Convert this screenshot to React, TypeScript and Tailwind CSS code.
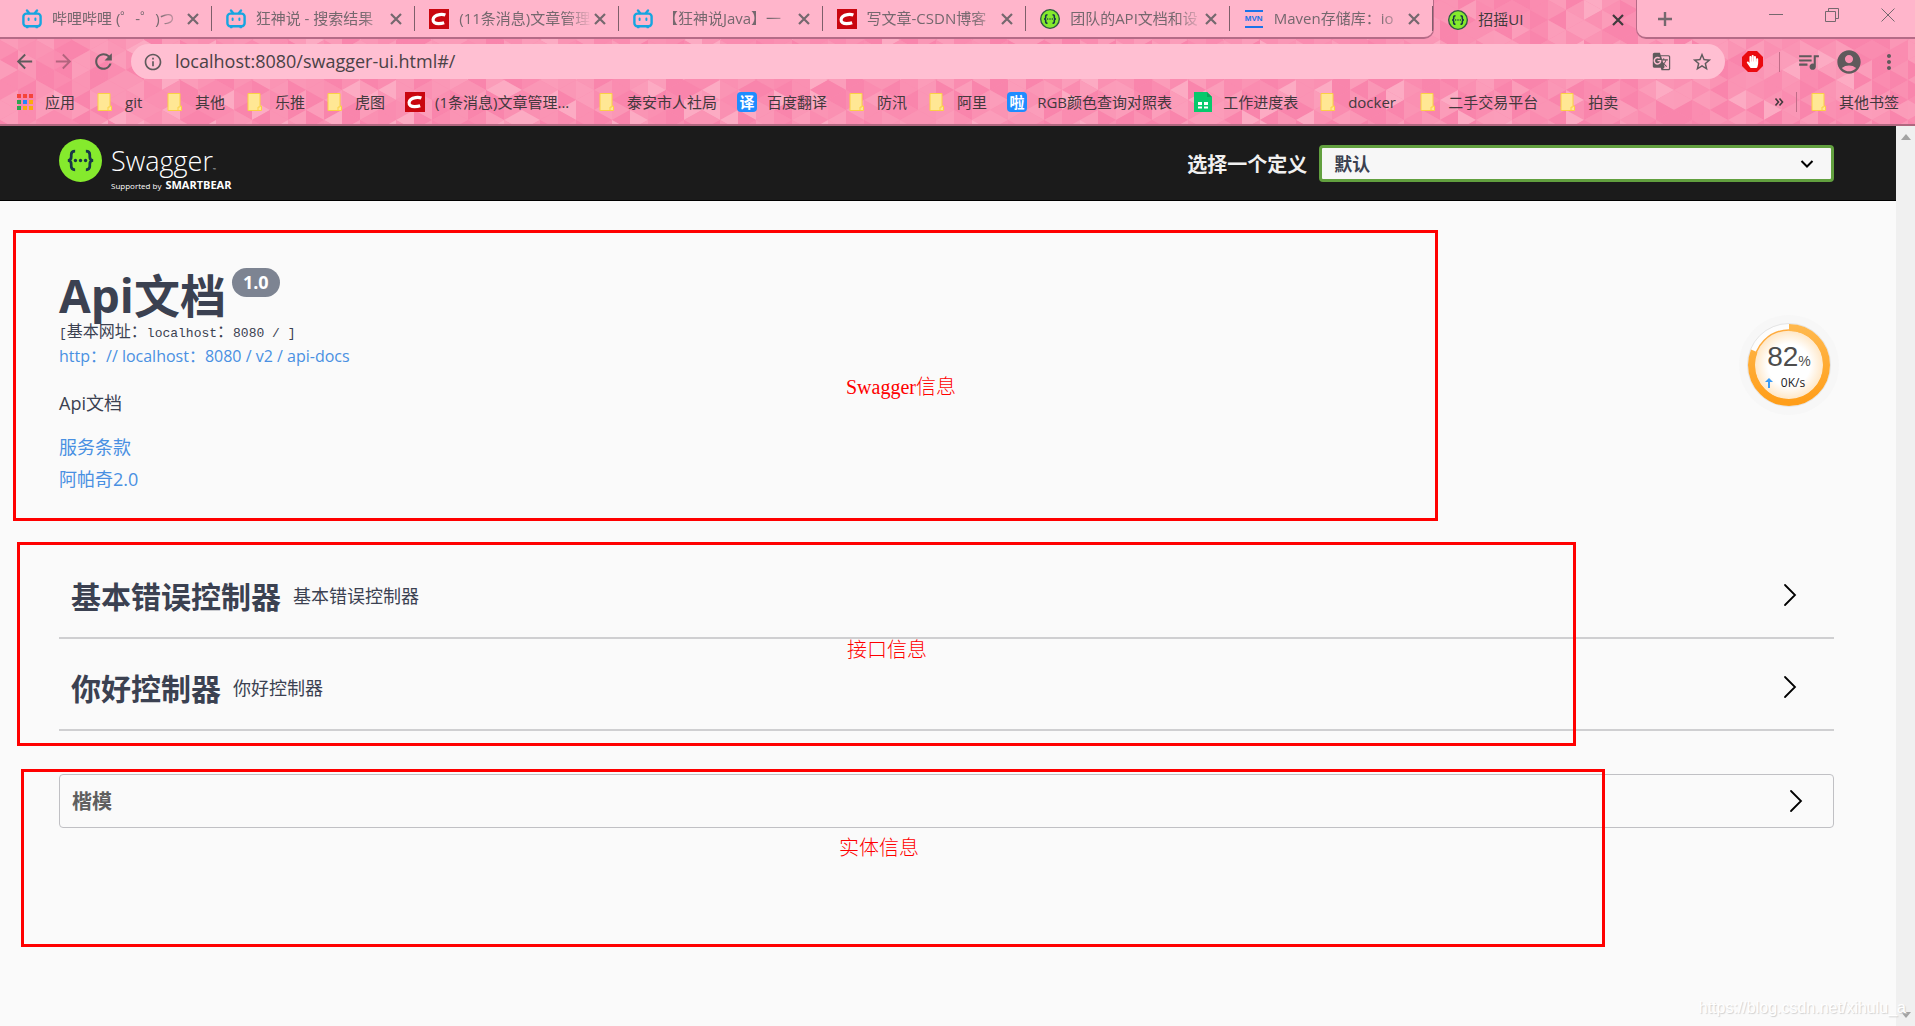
import type { ReactNode } from "react";
import {
  MdAccountCircle,
  MdArrowBack,
  MdArrowForward,
  MdGTranslate,
  MdMoreVert,
  MdOutlineInfo,
  MdQueueMusic,
  MdRefresh,
  MdStarBorder,
} from "react-icons/md";
import { FaHandPaper } from "react-icons/fa";

/* ---------- theme artwork ---------- */

const COL = 18;
const TRI = 20;
const SHADES = ["#f985ac", "#fa8cb0", "#fa94b4", "#fa97b6", "#fb9dba", "#fb9cb9", "#fa90b2", "#fcabc3"];

function shade(a: number, b: number, c: number) {
  const n = Math.sin(a * 127.1 + b * 311.7 + c * 74.7) * 43758.5453;
  const f = n - Math.floor(n);
  return SHADES[Math.floor(Math.pow(f, 1.4) * SHADES.length) % SHADES.length];
}

function ThemeTriangles() {
  const shapes: ReactNode[] = [];
  for (let i = 0; i < 150; i++) {
    const x = i * COL;
    const off = i % 2 ? -TRI / 2 : 0;
    for (let j = -1; j < 8; j++) {
      const y = j * TRI + off;
      shapes.push(
        <polygon
          key={`r${i}-${j}`}
          points={`${x},${y} ${x + COL},${y + TRI / 2} ${x},${y + TRI}`}
          fill={shade(i, j, 1)}
        />,
        <polygon
          key={`l${i}-${j}`}
          points={`${x + COL},${y + TRI / 2} ${x + COL},${y + TRI + TRI / 2} ${x},${y + TRI}`}
          fill={shade(i, j, 2)}
        />,
      );
    }
  }
  return (
    <svg className="absolute inset-0 h-full w-full" aria-hidden="true">
      <rect width="100%" height="100%" fill="#fa8fb1" />
      {shapes}
    </svg>
  );
}

/* ---------- icons ---------- */

function BiliIcon() {
  return (
    <svg viewBox="0 0 20 20" className="size-5 shrink-0" fill="none" stroke="#16a5e0" strokeWidth="2.4" strokeLinecap="round">
      <rect x="1.4" y="4.6" width="17.2" height="12.6" rx="3" />
      <path d="M5 1.4 7 4M15 1.4 13 4" />
      <path d="M6.6 9.4v1.6M13.4 9.4v1.6" strokeWidth="2" />
      <path d="M4.5 18.6h1.5M14 18.6h1.5" strokeWidth="1.4" />
    </svg>
  );
}

function CsdnIcon() {
  return (
    <svg viewBox="0 0 20 20" className="size-5 shrink-0">
      <rect width="20" height="20" fill="#c9060f" />
      <path
        d="M16.4 6.1C14.600 5.400 12.500 5.300 10.600 5.600 7.300 6.100 4.400 7.700 4.100 10.500 3.800 13.400 6.300 14.600 9.500 14.600 11.400 14.600 13.400 14.400 15.200 13.800"
        fill="none"
        stroke="#fff"
        strokeWidth="3.200"
      />
    </svg>
  );
}

function SwaggerMark({ className, ring }: { className: string; ring?: boolean }) {
  return (
    <svg viewBox="0 0 44 44" className={className}>
      <circle cx="22" cy="22" r={ring ? 20.5 : 22} fill="#85ea2d" stroke={ring ? "#2f5a42" : "none"} strokeWidth="3" />
      <g fill="none" stroke="#173647" strokeWidth={ring ? 3.4 : 2.8}>
        <path d="M16.500 12.500c-3 0-4 1-4 3.500v2.500c0 2-1 3.500-3.500 3.500 2.500 0 3.500 1.500 3.500 3.500V28c0 2.500 1 3.500 4 3.500" />
        <path d="M27.500 12.500c3 0 4 1 4 3.500v2.500c0 2 1 3.500 3.500 3.500-2.500 0-3.500 1.500-3.500 3.500V28c0 2.500-1 3.500-4 3.500" />
      </g>
      <g fill="#173647">
        <circle cx="16.800" cy="22" r="1.700" />
        <circle cx="22" cy="22" r="1.700" />
        <circle cx="27.200" cy="22" r="1.700" />
      </g>
    </svg>
  );
}

function MvnIcon() {
  return (
    <span className="flex size-5 shrink-0 items-center justify-center">
      <span className="flex h-[18px] w-[18px] items-center justify-center border-y-2 border-[#1a73e8] font-['Liberation_Sans'] text-[8px] font-bold leading-none text-[#1a73e8]">
        MVN
      </span>
    </span>
  );
}

function FolderIcon() {
  return (
    <svg viewBox="0 0 20 20" className="size-5 shrink-0">
      <path d="M3 1.500h12v12.500h1.500v4.500H3z" fill="#ffe794" stroke="#fbd044" />
      <path d="M13 18.500v-3.500h2v-1" fill="none" stroke="#fbd044" />
    </svg>
  );
}

function AppsIcon() {
  const colors = ["#f5443a", "#f5443a", "#f5443a", "#2ea44f", "#2386fa", "#fbab0c", "#2ea44f", "#fbab0c", "#fbab0c"];
  return (
    <svg viewBox="0 0 20 20" className="size-5 shrink-0">
      {colors.map((c, i) => (
        <rect key={i} x={2 + (i % 3) * 6} y={2 + Math.floor(i / 3) * 6} width="4" height="4" fill={c} />
      ))}
    </svg>
  );
}

function SheetIcon() {
  return (
    <svg viewBox="0 0 20 20" className="size-5 shrink-0">
      <path d="M1 0h13l5 5v15H1z" fill="#07c96c" />
      <path d="M14 0l5 5h-5z" fill="#0aa85b" />
      <path d="M5 10h4v3H5zM11 10h4v3h-4zM5 14.500h4v2H5zM11 14.500h4v2h-4z" fill="#fff" />
    </svg>
  );
}

function GlyphIcon({ children }: { children: string }) {
  return (
    <span className="flex size-5 shrink-0 items-center justify-center rounded bg-[#1f8cff] text-[15px] font-bold leading-5 text-white">
      {children}
    </span>
  );
}

function CloseIcon({ className }: { className: string }) {
  return (
    <svg viewBox="0 0 16 16" className={className} stroke="currentColor" strokeWidth="2.200" fill="none">
      <path d="M3 3l10 10M13 3 3 13" />
    </svg>
  );
}

function Chevron() {
  return (
    <svg viewBox="0 0 24 24" className="size-6" fill="none" stroke="#000" strokeWidth="1.800" strokeLinecap="round">
      <path d="M7 2l10 10L7 22" />
    </svg>
  );
}

/* ---------- browser chrome ---------- */

const TABS: { icon: ReactNode; title: string }[] = [
  { icon: <BiliIcon />, title: "哔哩哔哩 (゜-゜)つ" },
  { icon: <BiliIcon />, title: "狂神说 - 搜索结果" },
  { icon: <CsdnIcon />, title: "(11条消息)文章管理" },
  { icon: <BiliIcon />, title: "【狂神说Java】一" },
  { icon: <CsdnIcon />, title: "写文章-CSDN博客" },
  { icon: <SwaggerMark ring className="size-5 shrink-0" />, title: "团队的API文档和设" },
  { icon: <MvnIcon />, title: "Maven存储库：io" },
];

const BOOKMARKS: { icon: ReactNode; label: string; width?: string }[] = [
  { icon: <AppsIcon />, label: "应用" },
  { icon: <FolderIcon />, label: "git", width: "w-5" },
  { icon: <FolderIcon />, label: "其他" },
  { icon: <FolderIcon />, label: "乐推" },
  { icon: <FolderIcon />, label: "虎图" },
  { icon: <CsdnIcon />, label: "(1条消息)文章管理...", width: "w-[142px]" },
  { icon: <FolderIcon />, label: "泰安市人社局" },
  { icon: <GlyphIcon>译</GlyphIcon>, label: "百度翻译" },
  { icon: <FolderIcon />, label: "防汛" },
  { icon: <FolderIcon />, label: "阿里" },
  { icon: <GlyphIcon>啦</GlyphIcon>, label: "RGB颜色查询对照表", width: "w-[136px]" },
  { icon: <SheetIcon />, label: "工作进度表" },
  { icon: <FolderIcon />, label: "docker", width: "w-[50px]" },
  { icon: <FolderIcon />, label: "二手交易平台" },
  { icon: <FolderIcon />, label: "拍卖" },
];

function TabStrip() {
  return (
    <div className="relative flex h-[39px]">
      <div className="flex w-[74.9%] min-w-0 rounded-br-[10px] border-b-2 border-r border-[#b56b87] bg-[#ffb5cb] pl-2">
        {TABS.map((tab) => (
          <div key={tab.title} className="flex min-w-0 flex-1 items-center pl-[14px] text-[#75686e]">
            {tab.icon}
            <span className="ml-[10px] min-w-0 flex-1 overflow-hidden whitespace-nowrap text-[15px] [mask-image:linear-gradient(to_right,black_80%,transparent)]">
              {tab.title}
            </span>
            <button aria-label="关闭标签页" className="mr-[10px] shrink-0">
              <CloseIcon className="size-4" />
            </button>
            <span className="h-[25px] w-px shrink-0 bg-[#7d5f6a]" />
          </div>
        ))}
      </div>
      <div className="flex w-[202px] shrink-0 items-center pl-[14px] text-[#3f3a3c]">
        <SwaggerMark ring className="size-5 shrink-0" />
        <span className="ml-[10px] flex-1 text-[15px]">招摇UI</span>
        <button aria-label="关闭标签页" className="mr-[10px] shrink-0">
          <CloseIcon className="size-4" />
        </button>
      </div>
      <div className="flex min-w-0 flex-1 items-center rounded-bl-[10px] border-b-2 border-l border-[#b56b87] bg-[#ffb5cb] pl-5 text-[#75686e]">
        <button aria-label="新建标签页">
          <svg viewBox="0 0 16 16" className="size-4" stroke="currentColor" strokeWidth="2.400">
            <path d="M8 1v14M1 8h14" />
          </svg>
        </button>
        <div className="mb-2 ml-auto mr-5 flex gap-[42px]">
          <button aria-label="最小化">
            <svg viewBox="0 0 14 14" className="size-[14px]" stroke="currentColor" fill="none">
              <path d="M0 6.500h14" />
            </svg>
          </button>
          <button aria-label="还原">
            <svg viewBox="0 0 14 14" className="size-[14px]" stroke="currentColor" fill="none">
              <path d="M.5 3.500h10v10H.5zM3.500 3.500v-3h10v10h-3" />
            </svg>
          </button>
          <button aria-label="关闭">
            <svg viewBox="0 0 14 14" className="size-[14px]" stroke="currentColor" fill="none">
              <path d="M.5.5l13 13M13.500.5l-13 13" />
            </svg>
          </button>
        </div>
      </div>
    </div>
  );
}

function Toolbar() {
  return (
    <div className="relative flex h-[45px] items-center text-[#5f5a5c]">
      <button aria-label="后退" className="ml-[13px]">
        <MdArrowBack size={23} />
      </button>
      <button aria-label="前进" className="ml-4 text-[#b3647e]">
        <MdArrowForward size={23} />
      </button>
      <button aria-label="重新加载" className="ml-4">
        <MdRefresh size={25} />
      </button>
      <div className="ml-[15px] flex h-[35px] min-w-0 flex-1 items-center rounded-full bg-[#ffbfd2] px-3">
        <MdOutlineInfo size={20} className="shrink-0" />
        <input
          aria-label="地址栏"
          defaultValue="localhost:8080/swagger-ui.html#/"
          className="ml-3 min-w-0 flex-1 bg-transparent text-[18px] text-[#4a4246] outline-none"
        />
        <button aria-label="翻译此页">
          <MdGTranslate size={19} />
        </button>
        <button aria-label="为此页添加书签" className="ml-5">
          <MdStarBorder size={22} />
        </button>
      </div>
      <button aria-label="广告拦截" className="relative ml-[17px] flex size-[21px] items-center justify-center">
        <svg viewBox="0 0 21 21" className="absolute inset-0 size-[21px]">
          <path d="M6 0h9l6 6v9l-6 6H6l-6-6V6z" fill="#ea0a0f" />
        </svg>
        <FaHandPaper size={13} className="relative text-white" />
      </button>
      <span className="ml-4 h-5 w-px bg-[#c06d88]" />
      <button aria-label="媒体控制" className="ml-4">
        <MdQueueMusic size={25} />
      </button>
      <button aria-label="用户" className="ml-[14px]">
        <MdAccountCircle size={28} />
      </button>
      <button aria-label="菜单" className="mx-[14px]">
        <MdMoreVert size={24} />
      </button>
    </div>
  );
}

function BookmarkBar() {
  return (
    <nav className="relative flex h-10 items-center gap-5 overflow-hidden whitespace-nowrap pb-1 pl-[15px] pr-4 text-[15px] text-[#43393d]">
      {BOOKMARKS.map((b) => (
        <a key={b.label} href="#bookmark" className="flex shrink-0 items-center gap-[10px]">
          {b.icon}
          <span className={b.width}>{b.label}</span>
        </a>
      ))}
      <div className="ml-auto flex shrink-0 items-center gap-3">
        <button aria-label="更多书签">
          <svg viewBox="0 0 10 10" className="size-[10px]" fill="none" stroke="currentColor" strokeWidth="1.600">
            <path d="M1.500 1.500 4.500 5 1.500 8.500M5.500 1.500 8.500 5 5.500 8.500" />
          </svg>
        </button>
        <span className="h-5 w-px bg-[#c06d88]" />
        <a href="#other" className="flex items-center gap-[10px]">
          <FolderIcon />
          其他书签
        </a>
      </div>
    </nav>
  );
}

/* ---------- page ---------- */

function Topbar() {
  return (
    <header className="flex h-[75px] items-center border-b border-black bg-[#1b1b1b] pl-[59px] pr-[62px]">
      <a href="#home" className="flex items-start gap-[9px] self-start pt-[13px] text-white">
        <SwaggerMark className="size-[43px]" />
        <span className="flex flex-col pt-3">
          <span className="text-[27px] font-light leading-5">
            Swagger<span className="text-[4px]">™</span>
          </span>
          <span className="flex items-baseline gap-1 text-[8px] leading-[10px]">
            Supported by <b className="text-[11px] font-bold">SMARTBEAR</b>
          </span>
        </span>
      </a>
      <label htmlFor="definition" className="ml-auto mr-3 pt-1 text-[20px] font-bold text-[#f0f0f0]">
        选择一个定义
      </label>
      <div className="relative w-[29%] min-w-0">
        <select
          id="definition"
          className="h-[37px] w-full appearance-none rounded border-[3px] border-[#62a03f] bg-[#f7f7f7] pl-3 pt-[2px] text-[18px] font-bold text-[#3b4151]"
        >
          <option>默认</option>
        </select>
        <svg
          viewBox="0 0 14 14"
          className="pointer-events-none absolute right-5 top-3 size-[14px]"
          fill="none"
          stroke="#000"
          strokeWidth="2"
        >
          <path d="M1.500 4 7 9.500 12.500 4" />
        </svg>
      </div>
    </header>
  );
}

function ControllerRow({ name }: { name: string }) {
  return (
    <button className="flex h-[92px] w-full items-center border-b-2 border-[#cfcfd1] px-3 pt-[6px] text-left">
      <span className="pt-[2px] text-[30px] font-bold">{name}</span>
      <span className="ml-3 pt-[2px] text-[18px]">{name}</span>
      <span className="ml-auto mr-5">
        <Chevron />
      </span>
    </button>
  );
}

function SpeedBall() {
  const r = 37.5;
  const c = 2 * Math.PI * r;
  return (
    <div className="absolute right-[56px] top-[113px] flex size-[102px] flex-col items-center justify-center">
      <svg viewBox="0 0 102 102" className="absolute inset-0 size-[102px]">
        <defs>
          <radialGradient id="glow">
            <stop offset="0.600" stopColor="#fff" />
            <stop offset="1" stopColor="#ffe6c4" />
          </radialGradient>
          <linearGradient id="ring" x1="0" y1="0" x2="1" y2="0">
            <stop offset="0" stopColor="#ff9e1a" />
            <stop offset="1" stopColor="#ffb84d" />
          </linearGradient>
        </defs>
        <circle cx="51" cy="51" r="50" fill="#f7f7f7" />
        <circle cx="51" cy="51" r="41.500" fill="#fdfdfd" stroke="#e4e4e4" />
        <circle cx="51" cy="51" r="35" fill="url(#glow)" stroke="#ffab3d" strokeWidth="1.500" />
        <circle
          cx="51"
          cy="51"
          r={r}
          fill="none"
          stroke="url(#ring)"
          strokeWidth="7"
          strokeDasharray={`${c * 0.81} ${c}`}
          transform="rotate(-90 51 51)"
        />
      </svg>
      <div className="relative pt-1 font-['Liberation_Sans'] text-[28px] leading-7 text-[#4d4d4d]">
        82<span className="text-[14px]">%</span>
      </div>
      <div className="relative mr-2 flex items-center gap-2 text-[12px] leading-4 text-[#222]">
        <svg viewBox="0 0 8 10" className="h-[10px] w-2" fill="#3b9bf5">
          <path d="M4 0 8 4H5v6H3V4H0z" />
        </svg>
        0K/s
      </div>
    </div>
  );
}

const NOTE = "absolute border-[3px] border-[#ff0000] pointer-events-none";
const NOTE_TEXT =
  "absolute font-['Liberation_Serif','Noto_Sans_CJK_SC',serif] text-[20px] font-light leading-6 text-[#ff0000] pointer-events-none whitespace-nowrap";

function Annotations() {
  return (
    <>
      <div className={`${NOTE} left-[13px] top-[29px] h-[291px] w-[1425px]`} />
      <div className={`${NOTE} left-[17px] top-[341px] h-[204px] w-[1559px]`} />
      <div className={`${NOTE} left-[21px] top-[568px] h-[178px] w-[1584px]`} />
      <span className={`${NOTE_TEXT} left-[846px] top-[174px]`}>Swagger信息</span>
      <span className={`${NOTE_TEXT} left-[847px] top-[437px]`}>接口信息</span>
      <span className={`${NOTE_TEXT} left-[839px] top-[635px]`}>实体信息</span>
    </>
  );
}

function ScrollTrack() {
  return (
    <div className="flex w-[19px] shrink-0 flex-col items-center justify-between bg-[#f0f0f0] py-2">
      <svg viewBox="0 0 10 6" className="h-[6px] w-[10px]" fill="#a3a3a3">
        <path d="M5 0l5 6H0z" />
      </svg>
      <svg viewBox="0 0 10 6" className="h-[6px] w-[10px]" fill="#a3a3a3">
        <path d="M0 0h10L5 6z" />
      </svg>
    </div>
  );
}

export default function App() {
  return (
    <div className="relative flex min-h-screen flex-col bg-[#fafafa] font-['Open_Sans','Noto_Sans_CJK_SC',sans-serif] text-[#3b4151]">
      <div className="relative overflow-hidden border-b-2 border-[#b0677f]">
        <ThemeTriangles />
        <TabStrip />
        <Toolbar />
        <BookmarkBar />
      </div>

      <div className="flex flex-1">
        <div className="min-w-0 flex-1">
          <Topbar />
          <main className="relative pl-[59px] pr-[62px] pt-[69px]">
            <h1 className="flex items-start text-[46px] font-bold leading-[50px]">
              Api文档
              <span className="ml-[6px] -mt-[2px] rounded-full bg-[#7d8492] px-[11px] text-[18px] leading-[29px] text-white">
                1.0
              </span>
            </h1>
            <p className="mt-[2px] font-['Liberation_Mono','Noto_Sans_CJK_SC',monospace] text-[13px] leading-6">
              [<span className="text-[16px] leading-none">基本网址：</span>localhost
              <span className="text-[16px] leading-none">：</span>8080 / ]
            </p>
            <a href="#api-docs" className="block w-fit text-[16px] leading-5 text-[#4990e2]">
              http：// localhost：8080 / v2 / api-docs
            </a>
            <p className="mt-[25px] text-[18px] leading-6">Api文档</p>
            <a href="#terms" className="mt-5 block w-fit text-[18px] leading-6 text-[#4990e2]">
              服务条款
            </a>
            <a href="#license" className="mt-2 block w-fit text-[18px] leading-6 text-[#4990e2]">
              阿帕奇2.0
            </a>

            <section className="mt-14">
              <ControllerRow name="基本错误控制器" />
              <ControllerRow name="你好控制器" />
            </section>

            <section className="mt-[43px]">
              <button className="flex h-[54px] w-full items-center rounded border border-[#c0c0c4] px-3 text-left">
                <span className="pt-[2px] text-[20px] font-bold text-[#5f5f5f]">楷模</span>
                <span className="ml-auto mr-[13px]">
                  <Chevron />
                </span>
              </button>
            </section>

            <Annotations />
            <SpeedBall />
          </main>
        </div>
        <ScrollTrack />
      </div>

      <span className="pointer-events-none absolute bottom-2 right-[9px] font-['Liberation_Sans'] text-[16px] leading-5 text-white [text-shadow:1px_1px_1px_#d0d0d0]">
        https://blog.csdn.net/xihulu_a
      </span>
    </div>
  );
}
